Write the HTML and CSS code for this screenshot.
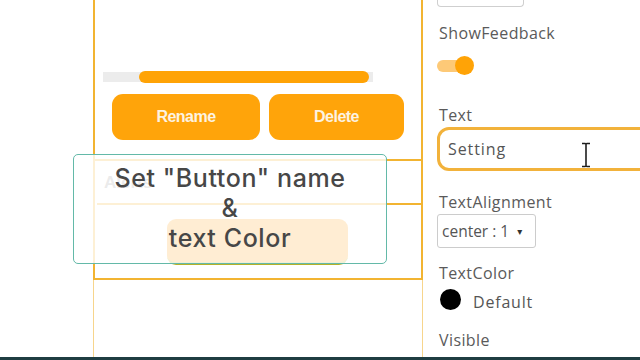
FILE: index.html
```html
<!DOCTYPE html>
<html>
<head>
<meta charset="utf-8">
<link rel="stylesheet" href="styles.css">
</head>
<body>
<div class="screen">
  <div class="main">
    <div class="gutter"></div>
    <div class="phone">
      <div class="phone-top">
        <div class="progress"><div class="progress-fill"></div></div>
        <div class="btn-row">
          <div class="btn btn-rename">Rename</div>
          <div class="btn btn-delete">Delete</div>
        </div>
      </div>
      <div class="phone-card">
        <div class="card-head">Alerts</div>
        <div class="card-body">
          <div class="ghost-btn"></div>
        </div>
      </div>
      <div class="phone-bottom"></div>
    </div>
    <div class="panel">
      <div class="top-box"></div>
      <div class="label lbl-feedback">ShowFeedback</div>
      <div class="toggle"><span class="toggle-track"></span><span class="toggle-knob"></span></div>
      <div class="label lbl-text">Text</div>
      <div class="text-input">
        <span class="input-value">Setting</span>
        <svg class="ibeam" width="12" height="26" viewBox="0 0 12 26"><path d="M2 1.5h3.2c0.5 0 0.8 0.4 0.8 1v21c0 0.6-0.3 1-0.8 1H2M10 1.5H6.8c-0.5 0-0.8 0.4-0.8 1v21c0 0.6 0.3 1 0.8 1H10" fill="none" stroke="#1e1e1e" stroke-width="1.6"/></svg>
      </div>
      <div class="label lbl-align">TextAlignment</div>
      <div class="select"><span>center : 1</span><span class="caret">&#9662;</span></div>
      <div class="label lbl-color">TextColor</div>
      <div class="color-row"><span class="swatch"></span><span class="color-name">Default</span></div>
      <div class="label lbl-visible">Visible</div>
    </div>
  </div>
  <div class="footer-bar"></div>
  <div class="caption">Set "Button" name<br>&amp;<br>text Color</div>
</div>
</body>
</html>
```

FILE: styles.css
```css
html, body {
  margin: 0;
  padding: 0;
  background: #ffffff;
}
.screen {
  position: relative;
  width: 640px;
  height: 360px;
  overflow: hidden;
  display: flex;
  flex-direction: column;
}
.main {
  display: flex;
  height: 357px;
}
.gutter {
  width: 93px;
  flex: none;
}
.phone {
  width: 330px;
  flex: none;
  display: flex;
  flex-direction: column;
}
.phone-top {
  height: 159px;
  box-sizing: border-box;
  border-left: 2px solid #f2b431;
  border-right: 2px solid #f2b431;
  padding-top: 72px;
}
.progress {
  margin-left: 8px;
  width: 270px;
  height: 10px;
  background: #ececec;
  display: flex;
  align-items: center;
}
.progress-fill {
  margin-left: 36px;
  width: 230px;
  height: 12px;
  border-radius: 6px;
  background: #ffa306;
}
.btn-row {
  display: flex;
  gap: 9px;
  margin-top: 12px;
  margin-left: 17px;
}
.btn {
  height: 46px;
  border-radius: 11px;
  background: #ffa40a;
  color: #fdf3e2;
  font-family: "Liberation Sans", Arial, sans-serif;
  font-weight: bold;
  font-size: 16px;
  letter-spacing: -0.5px;
  display: flex;
  align-items: center;
  justify-content: center;
}
.btn-rename { width: 148px; }
.btn-delete { width: 135px; }
.phone-card {
  height: 121px;
  box-sizing: border-box;
  border: 2px solid #f2b431;
  display: flex;
  flex-direction: column;
}
.card-head {
  height: 44px;
  flex: none;
  box-sizing: border-box;
  border-bottom: 2px solid #f2b431;
  margin-left: 2px;
  padding-left: 7px;
  padding-top: 12px;
  font-family: "Liberation Sans", Arial, sans-serif;
  font-weight: bold;
  font-size: 17px;
  color: #9a9a9a;
}
.card-body {
  flex: 1;
  padding-top: 14px;
  padding-left: 72px;
}
.ghost-btn {
  width: 181px;
  height: 43px;
  border-radius: 9px;
  background: #ffa726;
  border-bottom: 3px solid #b5b22a;
}
.phone-bottom {
  flex: 1;
  border-left: 1px solid #f7d58c;
  border-right: 1px solid #f7d58c;
}
.panel {
  flex: 1;
  padding-left: 14px;
  display: flex;
  flex-direction: column;
  font-family: "Open Sans", "DejaVu Sans", sans-serif;
  color: #5a5a5a;
}
.top-box {
  width: 85px;
  height: 6px;
  border: 1px solid #cfcfcf;
  border-top: none;
  border-radius: 0 0 4px 4px;
}
.label {
  height: 20px;
  line-height: 20px;
  font-size: 16px;
  letter-spacing: 0.4px;
  padding-left: 2px;
  white-space: nowrap;
}
.lbl-feedback { margin-top: 16px; }
.lbl-text { margin-top: 30px; }
.lbl-align { margin-top: 21px; }
.lbl-color { margin-top: 15px; }
.lbl-visible { margin-top: 20px; }
.toggle {
  margin-top: 13px;
  height: 19px;
  display: flex;
  align-items: center;
}
.toggle-track {
  width: 30px;
  height: 12px;
  border-radius: 6px;
  background: #fdc977;
}
.toggle-knob {
  width: 19px;
  height: 19px;
  border-radius: 50%;
  background: #ffa306;
  margin-left: -12px;
}
.text-input {
  position: relative;
  margin-top: 2px;
  width: 230px;
  height: 44px;
  box-sizing: border-box;
  border: 3px solid #f2b23b;
  border-radius: 12px;
  display: flex;
  align-items: center;
  padding-left: 8px;
}
.input-value {
  font-size: 16px;
  letter-spacing: 0.9px;
  color: #555555;
}
.ibeam {
  position: absolute;
  left: 140px;
  top: 12px;
}
.select {
  margin-top: 2px;
  width: 99px;
  height: 34px;
  box-sizing: border-box;
  border: 1px solid #cccccc;
  border-radius: 3px;
  display: flex;
  align-items: center;
  padding-left: 4px;
  font-size: 15.5px;
  color: #555555;
  white-space: nowrap;
}
.caret {
  font-size: 10px;
  margin-left: 8px;
  color: #333333;
}
.color-row {
  margin-top: 6px;
  height: 21px;
  display: flex;
  align-items: center;
  padding-left: 3px;
}
.swatch {
  width: 21px;
  height: 21px;
  border-radius: 50%;
  background: #000000;
}
.color-name {
  margin-left: 12px;
  margin-top: 4px;
  font-size: 16px;
  letter-spacing: 0.8px;
  color: #555555;
}
.footer-bar {
  height: 3px;
  background: #1f3d41;
}
.caption {
  position: absolute;
  left: 73px;
  top: 154px;
  width: 314px;
  height: 110px;
  box-sizing: border-box;
  border: 1px solid #63b9a8;
  border-radius: 5px;
  background: rgba(255, 255, 255, 0.8);
  padding-top: 8px;
  text-align: center;
  font-family: Inter, "Open Sans", sans-serif;
  font-weight: 500;
  font-size: 25px;
  line-height: 30px;
  letter-spacing: 0.6px;
  color: #474747;
}
```
